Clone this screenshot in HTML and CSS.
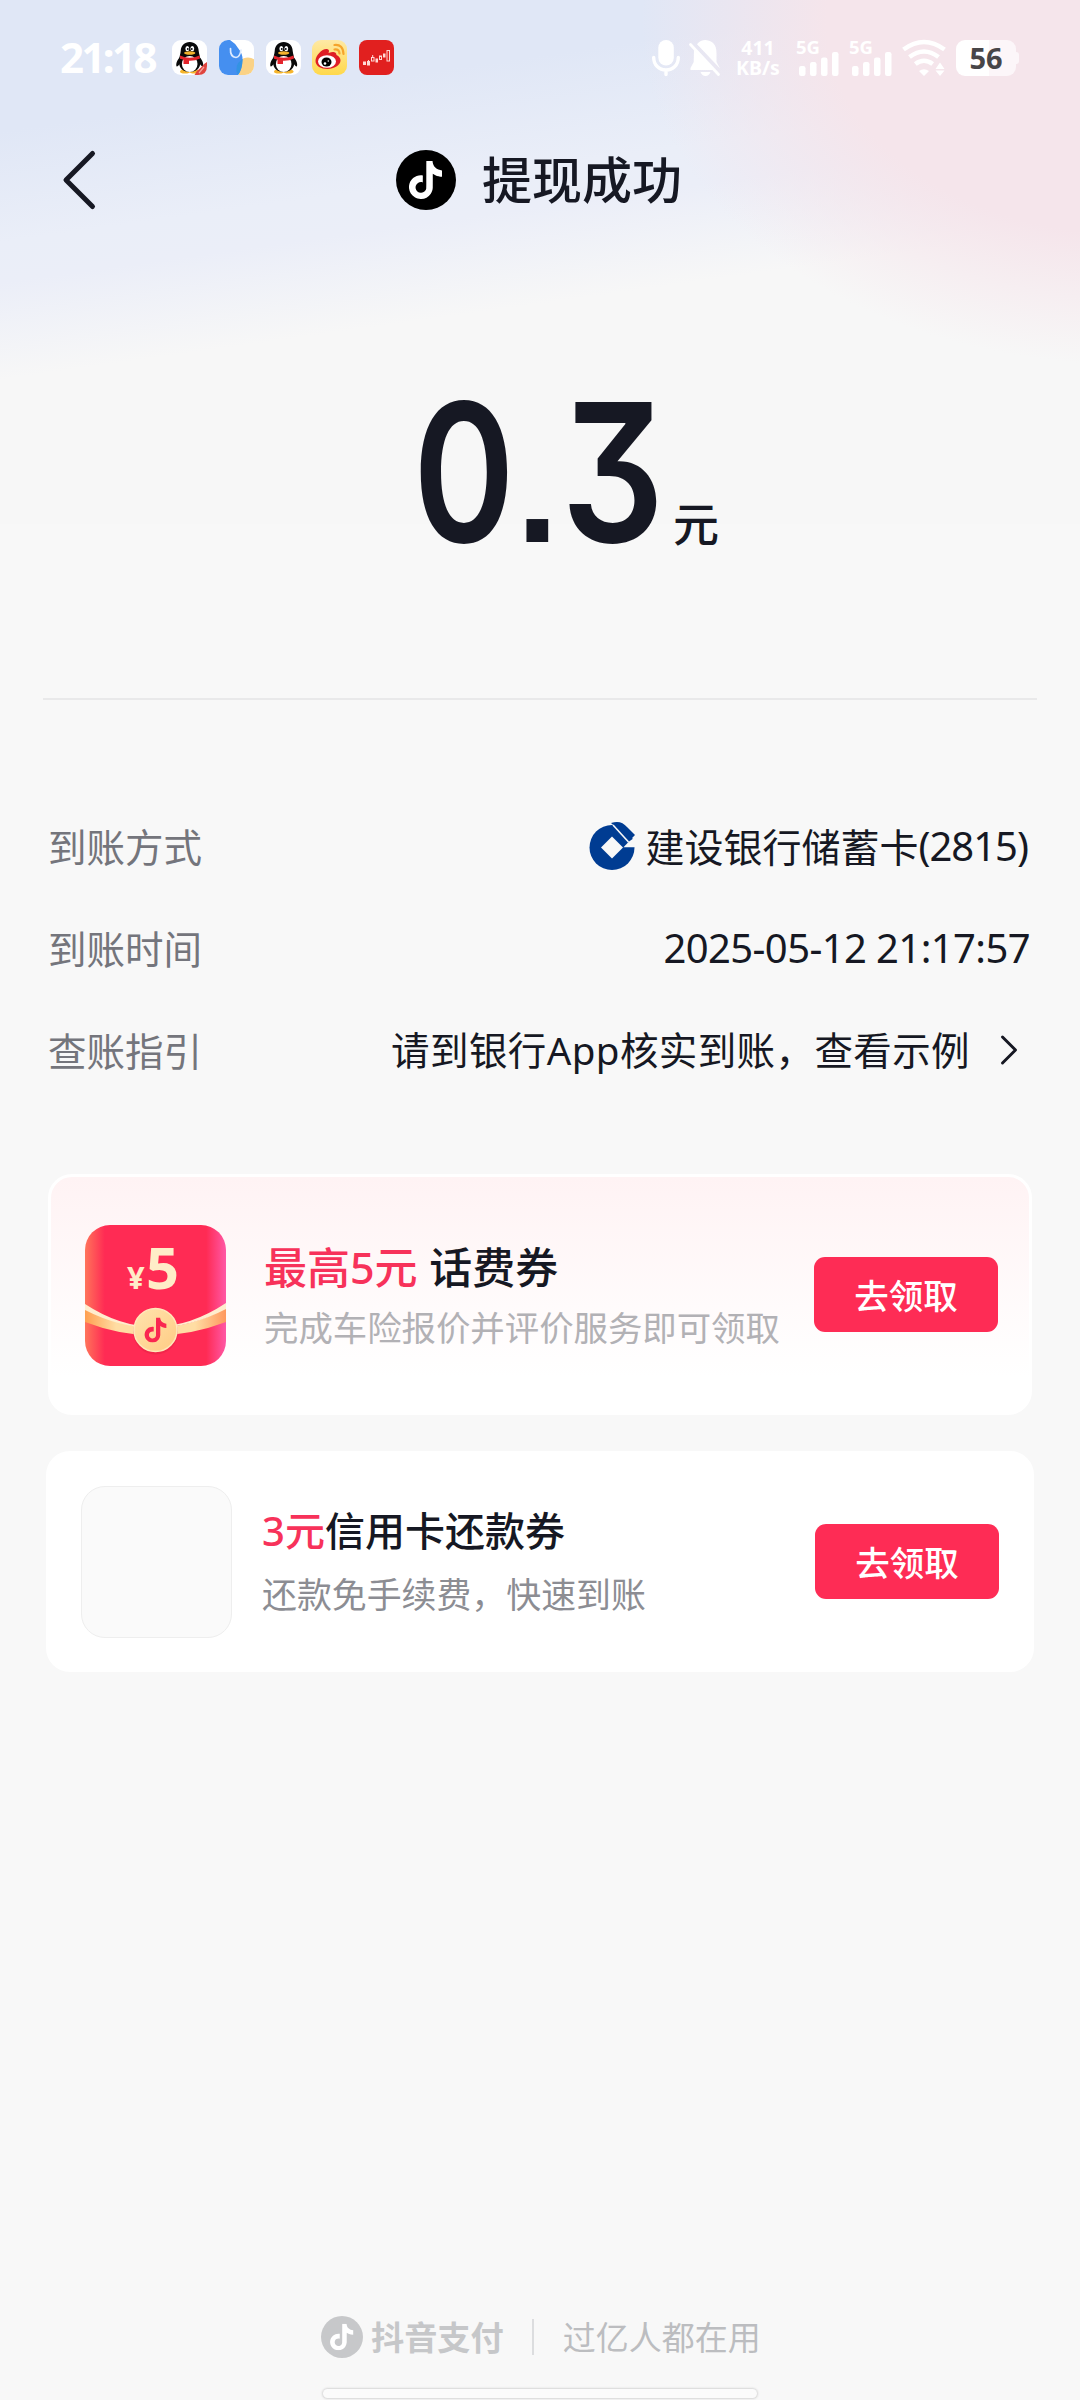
FILE: index.html
```html
<!DOCTYPE html>
<html lang="zh-CN">
<head>
<meta charset="utf-8">
<title>提现成功</title>
<link rel="stylesheet" href="styles.css">
</head>
<body>
<svg class="defs" width="0" height="0">
  <symbol id="note" viewBox="0 0 24 24">
    <path d="M12.525.02c1.31-.02 2.61-.01 3.91-.02.08 1.53.63 3.09 1.75 4.17 1.12 1.11 2.7 1.62 4.24 1.79v4.03c-1.44-.05-2.89-.35-4.2-.97-.57-.26-1.1-.59-1.62-.93-.01 2.92.01 5.84-.02 8.75-.08 1.4-.54 2.79-1.35 3.94-1.31 1.92-3.58 3.17-5.91 3.21-1.43.08-2.86-.31-4.08-1.03-2.02-1.19-3.44-3.37-3.65-5.71-.02-.5-.03-1-.01-1.49.18-1.9 1.12-3.72 2.58-4.96 1.66-1.44 3.98-2.13 6.15-1.72.02 1.48-.04 2.96-.04 4.44-.99-.32-2.15-.23-3.02.37-.63.41-1.11 1.04-1.36 1.75-.21.51-.15 1.07-.14 1.61.24 1.64 1.82 3.02 3.5 2.87 1.12-.01 2.19-.66 2.77-1.61.19-.33.4-.67.41-1.06.1-1.79.06-3.57.07-5.36.01-4.03-.01-8.05.02-12.07z"/>
  </symbol>
  <symbol id="penguin" viewBox="0 0 35 35">
    <rect width="35" height="35" rx="9" fill="#fff"/>
    <ellipse cx="13" cy="31.5" rx="5" ry="2" fill="#f6b52c"/>
    <ellipse cx="22.500" cy="31.500" rx="5" ry="2" fill="#f6b52c"/>
    <path d="M8 17C5 20 3.600 24 4.600 26.500C6 26.500 7 25 8 23.500ZM27.500 17C30.500 20 31.900 24 30.900 26.500C29.500 26.500 28.500 25 27.500 23.500Z" fill="#0a0a0a"/>
    <path d="M17.700 2C23 2 26.500 5.500 26.700 11C26.900 14 28.500 17 28.500 22C28.500 28.500 24 32 17.700 32S7 28.500 7 22C7 17 8.600 14 8.700 11C9 5.500 12.500 2 17.700 2Z" fill="#0a0a0a"/>
    <ellipse cx="17.700" cy="24" rx="7.800" ry="8" fill="#fff"/>
    <ellipse cx="15.300" cy="8.700" rx="1.900" ry="2.600" fill="#fff"/>
    <ellipse cx="20.300" cy="8.700" rx="1.900" ry="2.600" fill="#fff"/>
    <circle cx="15.800" cy="9" r=".9"/><circle cx="19.800" cy="9" r=".9"/>
    <ellipse cx="17.700" cy="13" rx="5.600" ry="1.700" fill="#f3b22d"/>
    <path d="M8 15.500Q17.700 20 27.500 15.500L28 18.500Q23 21 17 20.700V24H11.500V19.700L8 18.700Z" fill="#e3242c"/>
  </symbol>
  <symbol id="bars" viewBox="0 0 44 36">
    <g fill="currentColor"><rect x="3" y="26" width="6.500" height="10" rx="2.200"/><rect x="14" y="22" width="6.500" height="14" rx="2.200"/><rect x="25" y="17.500" width="6.500" height="18.500" rx="2.200"/><rect x="36" y="12" width="6.500" height="24" rx="2.200"/></g>
  </symbol>
</svg>

<main class="screen">
  <div class="status">
    <span class="clock">21:18</span>
    <div class="apps">
      <svg width="35" height="35" viewBox="0 0 35 35"><use href="#penguin" width="35" height="35"/><path d="M35 22V26Q35 35 26 35H22.500Q25 30 29 27.500Q31 24 35 22Z" fill="#e0443e"/><path d="M27 33l5-6" stroke="#f2a29d" stroke-width="1.200"/></svg>
      <svg width="35" height="35" viewBox="0 0 35 35"><defs><clipPath id="tile"><rect width="35" height="35" rx="9"/></clipPath></defs><g clip-path="url(#tile)"><rect width="35" height="35" fill="#fff"/><circle cx="29" cy="28.500" r="11" fill="#fad286"/><path d="M0 0H11Q16 3 19 8Q24 14 23.500 20Q23 30 19 35H0Z" fill="#458ff0"/><path d="M23.500 18.700Q23.500 29 19 35Q14 26 23.500 18.700Z" fill="#3393e3"/><path d="M11.500 8.500Q11 17 17 17.500Q21 17 22 10" fill="none" stroke="#dceaff" stroke-width="1.700" stroke-linecap="round"/></g></svg>
      <svg width="35" height="35"><use href="#penguin"/></svg>
      <svg width="35" height="35" viewBox="0 0 35 35"><defs><linearGradient id="wb" x2="0" y2="1"><stop stop-color="#fee9a5"/><stop offset="1" stop-color="#ffd84a"/></linearGradient></defs><rect width="35" height="35" rx="9" fill="url(#wb)"/><path d="M3.500 21C3.500 15 11 8 15 9Q18 9.500 16.500 13Q24 10 24.500 15Q28.500 17 28.500 20.500C28.500 25 22 29 15.500 29S3.500 26 3.500 21Z" fill="#df1e25"/><ellipse cx="15" cy="21.500" rx="9" ry="6.300" fill="#fff"/><ellipse cx="14.500" cy="22" rx="5" ry="4.600"/><circle cx="13" cy="23.500" r="1.300" fill="#fff"/><circle cx="16.300" cy="21" r=".8" fill="#fff"/><path d="M22.500 5Q31 4 31.500 14M22.500 9.500Q27 9 27.500 13.500" fill="none" stroke="#f5a42c" stroke-width="2.200" stroke-linecap="round"/></svg>
      <svg width="35" height="35" viewBox="0 0 35 35"><rect width="35" height="35" rx="8" fill="#e1201f"/><g fill="none" stroke="#ffd9d6" stroke-width="1"><rect x="8.500" y="21.500" width="2" height="3.500"/><rect x="12.500" y="17.500" width="2.500" height="3.500"/><path d="M13.700 15v2.500M9.500 20v5"/><rect x="20.500" y="16" width="2" height="3.500"/><rect x="28" y="10.500" width="2.500" height="10.500"/></g><g fill="#ffd9d6"><rect x="4" y="21.500" width="3" height="3.500"/><rect x="16.500" y="18.500" width="2.500" height="4"/><rect x="24" y="13.500" width="2.500" height="4"/></g></svg>
    </div>
    <div class="indicators">
      <svg width="28" height="36" viewBox="0 0 28 36"><rect x="6.300" y="0" width="15.500" height="25.500" rx="7.700" fill="currentColor"/><path d="M1.700 17.500C1.700 25 7 30 14 30S26.300 25 26.300 17.500M14 30V34.500" fill="none" stroke="currentColor" stroke-width="3.400" stroke-linecap="round"/></svg>
      <svg class="bell" width="32" height="36" viewBox="0 0 32 36"><path d="M8 4.200Q11.500 0 16.500 0Q27.500 1 27.500 13V22L31 28.500ZM5 9.500L25 30H1.500V28L4.700 22ZM11.500 32H21.500Q20 36 16.500 36T11.500 32Z" fill="currentColor"/><path d="M1.500 4.500L29.500 34.500" stroke="currentColor" stroke-width="2.800" stroke-linecap="round"/></svg>
      <div class="speed"><span>411</span><span>KB/s</span></div>
      <svg class="sig1" width="44" height="36"><use href="#bars"/><text x="0" y="14" class="signal-text">5G</text></svg>
      <svg class="sig2" width="44" height="36"><use href="#bars"/><text x="0" y="14" class="signal-text">5G</text></svg>
      <svg class="wifi" width="44" height="36" viewBox="0 0 44 36"><g fill="none" stroke="currentColor" stroke-width="4.600"><path d="M1.500 9.500Q22 -5.500 42.500 9.500"/><path d="M7.500 17Q22 6 36.500 17"/><path d="M13.300 24Q22 17.500 30.700 24"/></g><path d="M17 31Q22 27.500 27 31L22 36ZM33.500 29L38 22.500L42.500 29ZM33.500 30.500H42.500L38 36Z" fill="currentColor"/></svg>
      <div class="battery"><span class="charge">56</span></div>
    </div>
  </div>

  <header class="header">
    <svg class="back" width="36" height="60" viewBox="0 0 36 60"><path d="M32.500 3.500L6 30L32.500 56.500" fill="none" stroke="currentColor" stroke-width="5" stroke-linecap="round" stroke-linejoin="round"/></svg>
    <div class="title">
      <svg width="60" height="60" viewBox="0 0 60 60"><circle cx="30" cy="30" r="30"/><use href="#note" x="10.500" y="11" width="38" height="38" fill="#fff"/></svg>
      <h1>提现成功</h1>
    </div>
  </header>

  <section class="amount">
    <span class="digit zero">0</span><span class="dot">.</span><span class="digit three">3</span><span class="unit">元</span>
  </section>

  <section class="details">
    <div class="row"><span class="label">到账方式</span><span class="value">
      <svg class="bank" width="46" height="48" viewBox="0 0 46 48"><circle cx="23" cy="25.500" r="22.500" fill="#003c92"/><path d="M22 1Q32 -2.500 38 5L46 13L41 18L22 1Z" fill="#003c92"/><path d="M24 3L39.500 20" stroke="#f8f8f8" stroke-width="1.600"/><path d="M34.500 25.300L40 19.500L48 14V25.300Z" fill="#f8f8f8"/><path d="M23 14.500L34 25.500L23 36.500L12 25.500Z" fill="#f8f8f8"/></svg>
      <span class="account">建设银行储蓄卡</span><span class="latin code">(2815)</span></span></div>
    <div class="row"><span class="label">到账时间</span><span class="value latin time">2025-05-12 21:17:57</span></div>
    <div class="row"><span class="label">查账指引</span><span class="value guide"><span class="hint">请到银行<span class="latin">App</span>核实到账，查看示例</span>
      <svg class="more" width="18" height="32" viewBox="0 0 18 32"><path d="M2.500 3L15.500 16L2.500 29" fill="none" stroke="currentColor" stroke-width="3" stroke-linecap="round" stroke-linejoin="round"/></svg></span></div>
  </section>

  <section class="cards">
    <article class="card phone">
      <svg class="envelope" width="141" height="141" viewBox="0 0 141 141">
        <defs>
          <linearGradient id="red"><stop stop-color="#ff745a"/><stop offset=".14" stop-color="#ff2b54"/><stop offset=".86" stop-color="#ff2b54"/><stop offset="1" stop-color="#ff58a6"/></linearGradient>
          <linearGradient id="gold"><stop stop-color="#ff9f50"/><stop offset=".22" stop-color="#ffdda3"/><stop offset=".78" stop-color="#ffdda3"/><stop offset="1" stop-color="#ff985e"/></linearGradient>
          <linearGradient id="coin" x2="1" y2="1"><stop stop-color="#ffe4ae"/><stop offset="1" stop-color="#ffcb83"/></linearGradient>
          <clipPath id="env"><rect width="141" height="141" rx="25"/></clipPath>
        </defs>
        <g clip-path="url(#env)">
          <rect width="141" height="141" fill="url(#red)"/>
          <path d="M0 83Q70 122 141 83V97Q70 124 0 97Z" fill="url(#gold)"/>
          <path d="M0 79Q70 125 141 78V84Q70 121 0 85Z" fill="#ffedce"/>
        </g>
        <circle cx="70.500" cy="107" r="22.500" fill="#d91d3d" opacity=".35"/>
        <circle cx="70.500" cy="105" r="21.500" fill="url(#coin)" stroke="#ffe8ba" stroke-width="1.500"/>
        <use href="#note" x="58" y="92.500" width="25" height="25" fill="#fa2750"/>
        <text x="42" y="64" class="yen">¥</text><text x="61" y="64" class="five" textLength="33" lengthAdjust="spacingAndGlyphs">5</text>
      </svg>
      <div class="copy"><h2><em>最高<span class="latin">5</span>元</em> 话费券</h2><p>完成车险报价并评价服务即可领取</p></div>
      <button>去领取</button>
    </article>
    <article class="card credit">
      <div class="placeholder"></div>
      <div class="copy"><h2><em><span class="latin">3</span>元</em>信用卡还款券</h2><p>还款免手续费，快速到账</p></div>
      <button>去领取</button>
    </article>
  </section>

  <footer class="footer">
    <svg width="42" height="42" viewBox="0 0 60 60"><circle cx="30" cy="30" r="30" fill="#c7c8ca"/><use href="#note" x="10.500" y="11" width="38" height="38" fill="#fff"/></svg>
    <strong>抖音支付</strong>
    <i class="rule"></i>
    <span class="slogan">过亿人都在用</span>
  </footer>
  <div class="homebar"></div>
</main>
</body>
</html>
```
FILE: styles.css
```css
* { box-sizing: border-box; margin: 0; padding: 0; }
body { background: #f8f8f8; font-family: "Noto Sans CJK SC", sans-serif; color: #161823; }
.defs { position: absolute; }
svg { display: block; flex: none; overflow: visible; }
.screen {
  width: 1080px; height: 2400px; overflow: hidden;
  display: flex; flex-direction: column;
  background:
    radial-gradient(ellipse 490px 345px at 1130px 20px, #f5e5eb 62%, rgba(245, 229, 235, 0) 100%) no-repeat 0 0 / 1080px 524px,
    linear-gradient(172deg, #e0e7f6 130px, #eaeef8 240px, #ebeef8 280px, #f7f7f7 376px) no-repeat 0 0 / 1080px 524px,
    #f8f8f8;
}
.latin { font-family: "Noto Sans", sans-serif; }

.status { height: 115px; padding: 40px 64px 39px 60px; display: flex; align-items: flex-start; color: #fff; }
.clock { width: 112px; font: 700 42px/34px "Noto Sans", sans-serif; letter-spacing: -2.6px; white-space: nowrap; }
.apps { display: flex; gap: 11.75px; }
.indicators { margin-left: auto; display: flex; }
.bell { margin-left: 9px; }
.speed { width: 50px; margin-left: 12px; display: flex; flex-direction: column; align-items: center; font: 700 19.500px/20px "Noto Sans", sans-serif; margin-top: -2px; }
.sig1 { margin-left: 13px; }
.sig2 { margin-left: 9px; }
.signal-text { font: 700 18.500px "Noto Sans", sans-serif; fill: #fff; }
.wifi { margin-left: 9px; }
.battery { margin-left: 10px; width: 60px; height: 36px; border-radius: 9px; background: linear-gradient(90deg, #fff 55%, #fcf6f9 55%); position: relative; text-align: center; }
.battery::after { content: ""; position: absolute; left: 60px; top: 12px; width: 3px; height: 12px; border-radius: 0 3px 3px 0; background: #fcf6f9; }
.charge { font: 700 29px/35px "Noto Sans", sans-serif; color: #484648; }

.header { height: 130px; padding: 0 60px; display: flex; align-items: center; }
.title { display: flex; align-items: center; gap: 26px; margin-left: 300px; }
.title h1 { font-size: 50px; line-height: 60px; font-weight: 500; padding-bottom: 6px; }

.amount { height: 455px; margin: 0 43px; padding: 127px 0 0 370px; border-bottom: 2px solid #e9e9ea; display: flex; align-items: baseline; }
.digit { font: 600 193px/200px Inter, sans-serif; font-feature-settings: "cv09" 1; transform-origin: 0 50%; }
.zero { width: 103px; transform: scaleX(.8); }
.dot { width: 45px; font: 700 154px/200px "Liberation Sans", sans-serif; }
.three { width: 112px; transform: scaleX(.84); }
.unit { font-size: 46px; line-height: 60px; font-weight: 500; align-self: flex-start; margin-top: 119px; }

.details { margin-top: 95px; padding: 0 50px 0 48px; }
.row { height: 102px; display: flex; align-items: center; justify-content: space-between; font-size: 38.500px; line-height: 60px; }
.label, .account, .hint { padding-bottom: 3px; }
.label { color: #74757c; }
.value { display: flex; align-items: center; white-space: nowrap; }
.bank { margin-right: 10px; }
.account { font-size: 39px; }
.guide { padding-right: 12px; }
.hint { letter-spacing: .4px; }
.more { margin-left: 30px; }
.time { font-size: 40px; letter-spacing: -.6px; }
.code { font-size: 40px; letter-spacing: -1px; padding-right: 2px; }

.cards { margin-top: 73px; display: flex; flex-direction: column; align-items: center; gap: 36px; }
.card { display: flex; align-items: center; background: #fff; border-radius: 24px; }
.phone { width: 984px; height: 241px; border: 3px solid #fff; padding: 0 31px 0 34px; background: linear-gradient(#fff3f4, #fff 85%); }
.envelope { margin-top: 2px; }
.credit { width: 988px; height: 221px; padding: 0 35px; }
.copy { flex: 1; white-space: nowrap; }
.phone .copy { padding-left: 38px; }
.credit .copy { padding-left: 30px; }
h2 { font-weight: 500; line-height: 60px; }
h2 em { font-style: normal; color: #f7325a; }
.phone h2 { font-size: 43px; word-spacing: 2px; padding-top: 2px; margin-bottom: -2px; }
.phone p { font-size: 34.400px; line-height: 60px; color: #b2b1b5; }
.credit h2 { font-size: 40px; margin-top: -2px; padding-bottom: 2px; }
.credit p { font-size: 34.900px; line-height: 60px; color: #8c8d93; }
.placeholder { width: 151px; height: 152px; border: 1px solid #eee; border-radius: 24px; background: #fafafa; }
button { flex: none; width: 184px; height: 75px; border: 0; border-radius: 11px; background: #fe2c55; color: #fff; font: 500 34.500px/75px "Noto Sans CJK SC", sans-serif; padding-bottom: 4px; }
.yen { font: 700 31px "Noto Sans", sans-serif; fill: #ffedc8; }
.five { font: 700 58px "Noto Sans", sans-serif; fill: #ffedc8; }

.footer { margin-top: auto; height: 60px; display: flex; align-items: center; padding-left: 321px; color: #bcbdc0; font-size: 33px; line-height: 60px; }
.footer strong { font-size: 33.200px; margin-left: 8px; color: #c6c7c9; font-weight: 700; padding-bottom: 2px; }
.rule { width: 2px; height: 36px; margin: 0 29px 0 28px; background: #dcdddf; }
.slogan { padding-bottom: 2px; }
.homebar { width: 434px; height: 9px; margin: 22px auto 2px; border-radius: 5px; background: #fbfbfb; box-shadow: 0 0 2px 1px #d7d7d7; }
```
